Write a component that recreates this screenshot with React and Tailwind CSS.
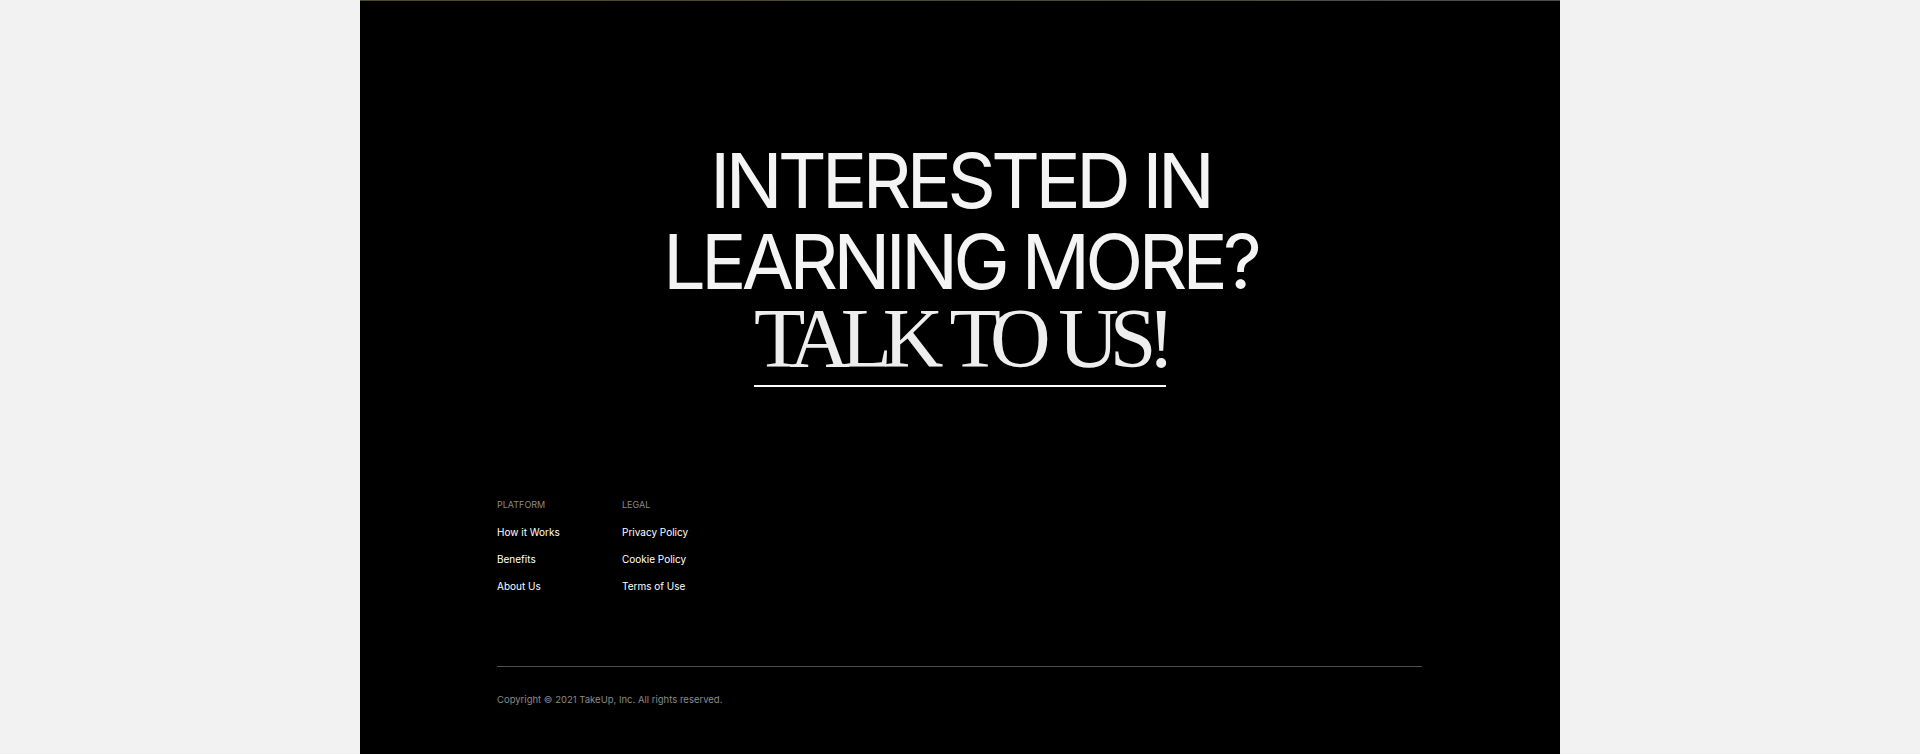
const platformLinks = ["How it Works", "Benefits", "About Us"];
const legalLinks = ["Privacy Policy", "Cookie Policy", "Terms of Use"];

const FooterColumn = ({ title, links }) => (
  <div className="w-[125px]">
    <p className="text-[9px] leading-[12px] uppercase text-[#8a8a8a]">
      {title}
    </p>
    <ul className="mt-[15px] flex flex-col gap-[14px]">
      {links.map((link) => (
        <li key={link} className="text-[10px] leading-[13px]">
          <a href="#" className="text-white">
            {link}
          </a>
        </li>
      ))}
    </ul>
  </div>
);

const App = () => {
  return (
    <div
      className="min-h-screen w-full bg-[#f2f2f2] flex justify-center"
      style={{ fontFamily: "Inter, 'Liberation Sans', sans-serif" }}
    >
      <div className="w-[1200px] h-[754px] bg-black flex flex-col relative">
        <div className="h-px w-full bg-gradient-to-r from-[#504a2c] to-[#4a4a4a]" />

        <div className="flex flex-col items-center pt-[139px]">
          <h2 className="text-[76px] leading-[81px] text-[#f4f4f4] text-center font-normal tracking-[-0.065em]">
            INTERESTED IN
            <br />
            LEARNING MORE?
          </h2>
          <a
            href="#"
            className="mt-[-5px] inline-block text-[84px] leading-[84px] text-[#eeeeee] tracking-[-0.11em] [word-spacing:0.06em] font-[300] border-b-2 border-white pb-[4px]"
            style={{ fontFamily: "'Liberation Serif', serif" }}
          >
            TALK TO US!
          </a>
        </div>

        <div className="pl-[137px] pr-[138px] mt-auto pb-[48px]">
          <div className="flex">
            <FooterColumn title="Platform" links={platformLinks} />
            <FooterColumn title="Legal" links={legalLinks} />
          </div>
          <div className="mt-[73px] h-px bg-[#4f4f4f]" />
          <p className="mt-[27px] text-[9.5px] leading-[12px] text-[#8a8a8a]">
            Copyright © 2021 TakeUp, Inc. All rights reserved.
          </p>
        </div>
      </div>
    </div>
  );
};

export default App;
